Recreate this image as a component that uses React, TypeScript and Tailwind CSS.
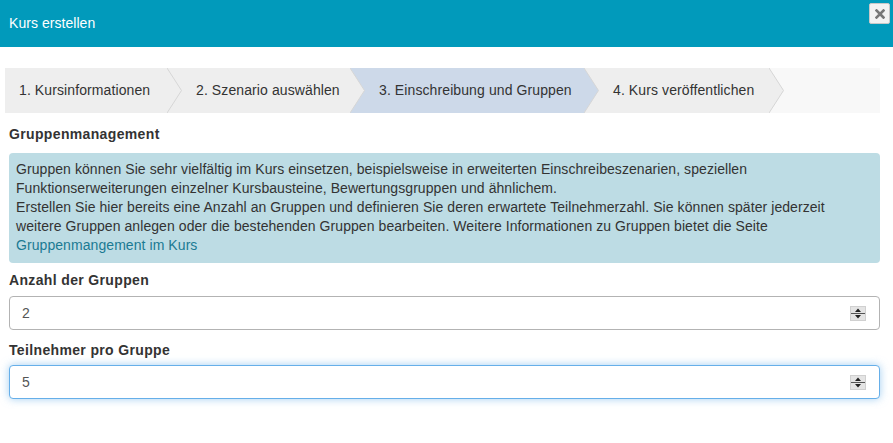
import { Fragment } from "react";

const steps = [
  { label: "1. Kursinformationen", w: "w-[162px]" },
  { label: "2. Szenario auswählen", w: "w-[168px]" },
  { label: "3. Einschreibung und Gruppen", w: "w-[219px]" },
  { label: "4. Kurs veröffentlichen", w: "w-[170px]" },
];
const active = 2;

function Chevron({ color, next }: { color: string; next: string }) {
  return (
    <svg width="15" height="45" viewBox="0 0 15 45" className="block shrink-0">
      <rect x="0" y="0" width="15" height="45" fill={next} />
      <polygon points="0,0 14.5,22.5 0,45" fill={color} />
      <polyline points="0,0 14.5,22.5 0,45" fill="none" stroke="#d6d6d6" strokeWidth="1" />
    </svg>
  );
}

function Spinner() {
  return (
    <svg width="16" height="15" viewBox="0 0 16 15" className="block">
      <rect x="0.5" y="0.5" width="15" height="14" fill="#e4e4e4" stroke="#d0d0d0" />
      <polygon points="8,2.5 11,6 5,6" fill="#222" />
      <polygon points="8,12.5 11,9 5,9" fill="#222" />
      <line x1="1" y1="7.5" x2="15" y2="7.5" stroke="#555" strokeWidth="1" />
    </svg>
  );
}

function NumberField({ value, focused }: { value: string; focused?: boolean }) {
  return (
    <div
      className={
        focused
          ? "mx-[9px] mr-[13px] flex h-[34px] items-center rounded-[4px] border border-[#66afe9] bg-white pl-[12px] pr-[13px] shadow-[0_0_8px_rgba(102,175,233,0.6)]"
          : "mx-[9px] mr-[13px] flex h-[34px] items-center rounded-[4px] border border-[#b3b3b3] bg-white pl-[12px] pr-[13px]"
      }
    >
      <span className="flex-1 text-[14px] text-[#555]">{value}</span>
      <Spinner />
    </div>
  );
}

export default function App() {
  return (
    <div className="relative h-[443px] w-[893px] bg-white font-['Liberation_Sans',Arial,sans-serif] text-[14px] text-[#333]">
      <header className="flex h-[47px] items-center bg-[#019abb] px-[9px] text-[14px] tracking-[0.05px] text-white">
        Kurs erstellen
      </header>
      <button className="absolute right-[3px] top-[3px] flex h-[21px] w-[21px] items-center justify-center rounded-[2px] border border-[#c8c8c8] bg-[#f2f2f2]">
        <svg width="10" height="10" viewBox="0 0 10 10">
          <path d="M1.5 1.5 L8.5 8.5 M8.5 1.5 L1.5 8.5" stroke="#777" strokeWidth="2.6" strokeLinecap="square" />
        </svg>
      </button>

      <nav className="ml-[5px] mr-[13px] mt-[21px] flex h-[45px] bg-[#f8f8f8]">
        {steps.map((s, i) => {
          const color = i === active ? "#cdd9e9" : "#eeeeee";
          const next = i === steps.length - 1 ? "#f8f8f8" : i + 1 === active ? "#cdd9e9" : "#eeeeee";
          return (
            <Fragment key={s.label}>
              <div
                className={
                  (i === active ? "bg-[#cdd9e9] " : "bg-[#eeeeee] ") +
                  s.w +
                  " flex shrink-0 items-center whitespace-nowrap pl-[14px] tracking-[0.1px] text-[#333]"
                }
              >
                {s.label}
              </div>
              <Chevron color={color} next={next} />
            </Fragment>
          );
        })}
      </nav>

      <div className="mt-[11px] px-[9px] font-bold leading-[20px] tracking-[0.35px]">Gruppenmanagement</div>
      <div className="ml-[9px] mr-[13px] mt-[9px] whitespace-nowrap rounded-[4px] bg-[#bddce4] px-[7px] pb-[8px] pt-[7px] leading-[19px] tracking-[0.07px]">
        Gruppen können Sie sehr vielfältig im Kurs einsetzen, beispielsweise in erweiterten Einschreibeszenarien, speziellen
        <br />
        Funktionserweiterungen einzelner Kursbausteine, Bewertungsgruppen und ähnlichem.
        <br />
        Erstellen Sie hier bereits eine Anzahl an Gruppen und definieren Sie deren erwartete Teilnehmerzahl. Sie können später jederzeit
        <br />
        weitere Gruppen anlegen oder die bestehenden Gruppen bearbeiten. Weitere Informationen zu Gruppen bietet die Seite
        <br />
        <a className="text-[#1b7a93]">Gruppenmangement im Kurs</a>
      </div>

      <div className="mt-[7px] px-[9px] font-bold leading-[20px] tracking-[0.35px]">Anzahl der Gruppen</div>
      <div className="mt-[6px]">
        <NumberField value="2" />
      </div>

      <div className="mt-[10px] px-[9px] font-bold leading-[20px] tracking-[0.35px]">Teilnehmer pro Gruppe</div>
      <div className="mt-[5px]">
        <NumberField value="5" focused />
      </div>
    </div>
  );
}
